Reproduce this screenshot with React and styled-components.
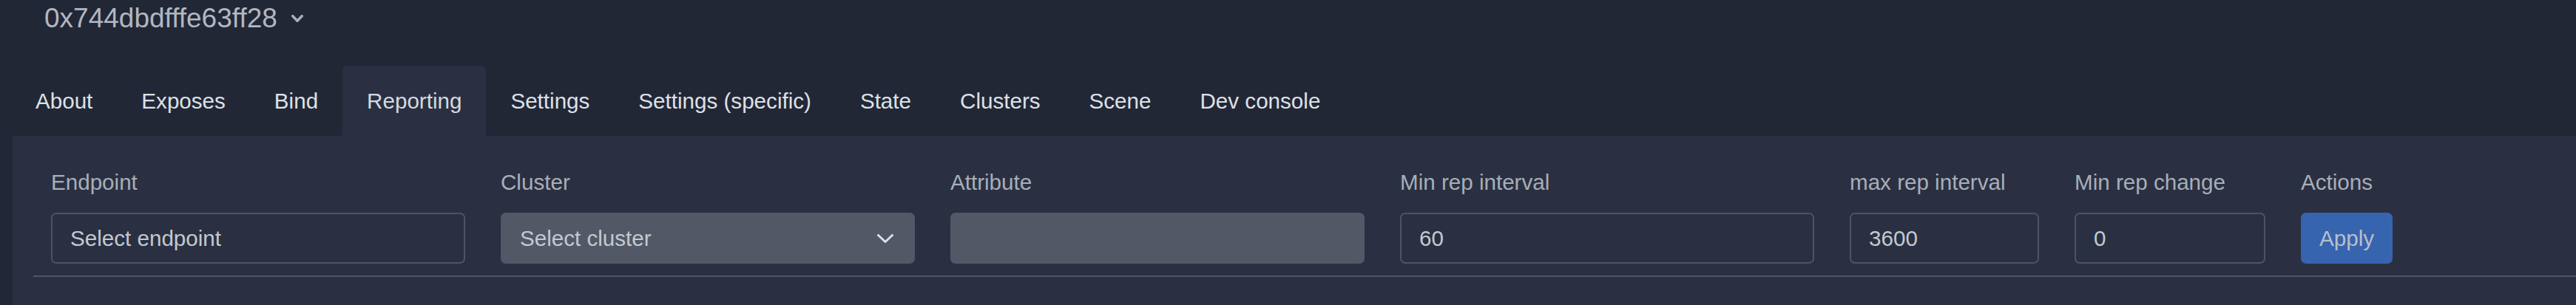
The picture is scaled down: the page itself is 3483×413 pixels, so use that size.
import React from 'react'
import styled, { createGlobalStyle } from 'styled-components'

const GlobalStyle = createGlobalStyle`
	body {
		margin: 0;
		background: #222736;
		font-family: "Liberation Sans", Arial, sans-serif;
	}
`

const Page = styled.div`
	padding-left: 15px;
	min-height: 413px;
`

const Header = styled.div`
	display: flex;
	align-items: center;
	gap: 19px;
	padding: 3px 0 0 45px;
	height: 44px;
	color: #b2b7c0;
	font-size: 37px;
	line-height: 44px;
`

const Nav = styled.div`
	display: flex;
	margin-top: 42px;
`

const Tab = styled.div`
	padding: 25px 33px;
	font-size: 29.6px;
	line-height: 45px;
	color: ${props => props.active ? '#d5d9df' : '#dde1e6'};
	background: ${props => props.active ? '#2a3042' : 'transparent'};
	border-radius: 7px 7px 0 0;
	white-space: nowrap;
`

const Panel = styled.div`
	margin-left: 2px;
	background: #2a3042;
	padding: 41px 0 40px 28px;
`

const Grid = styled.div`
	display: grid;
	grid-template-columns: 608px 608px 608px 608px 304px 306px 1fr;
	row-gap: 19px;
	padding-bottom: 16px;
	border-bottom: 2px solid #4f5563;
`

const Cell = styled.div`
	padding: 0 24px;
`

const Label = styled.div`
	font-size: 29.6px;
	line-height: 44.4px;
	color: #a8aeb8;
	white-space: nowrap;
`

const Field = styled.div`
	display: flex;
	align-items: center;
	justify-content: space-between;
	box-sizing: border-box;
	height: 69px;
	padding: 0 27px 0 24px;
	border: 2px solid ${props => props.filled ? '#525866' : '#4d5363'};
	border-radius: 7px;
	background: ${props => props.filled ? '#525866' : 'transparent'};
	color: #c4c9d0;
	font-size: 29.6px;
	line-height: 44.4px;
	white-space: nowrap;
`

const Button = styled.button`
	height: 69px;
	padding: 0 25px;
	border: none;
	border-radius: 7px;
	background: #3764ae;
	color: #b7bfcc;
	font: inherit;
	font-size: 29.6px;
	line-height: 44.4px;
`

const Caret = ({ width, height, color, stroke }) => (
	<svg width={width} height={height} viewBox={`0 0 ${width} ${height}`}>
		<polyline
			points={`${stroke / 2},${stroke / 2} ${width / 2},${height - stroke / 2} ${width - stroke / 2},${stroke / 2}`}
			fill="none"
			stroke={color}
			strokeWidth={stroke}
			strokeLinecap="round"
			strokeLinejoin="round" />
	</svg>
)

const tabs = ['About', 'Exposes', 'Bind', 'Reporting', 'Settings', 'Settings (specific)', 'State', 'Clusters', 'Scene', 'Dev console']

const labels = ['Endpoint', 'Cluster', 'Attribute', 'Min rep interval', 'max rep interval', 'Min rep change', 'Actions']

const App = () => {
	return (
		<Page>
			<GlobalStyle />
			<Header>
				<span>0x744dbdfffe63ff28</span>
				<Caret width={16} height={10} color="#a9aeb8" stroke={3.5} />
			</Header>

			<Nav>
				{tabs.map(tab => (
					<Tab key={tab} active={tab === 'Reporting'}>{tab}</Tab>
				))}
			</Nav>

			<Panel>
				<Grid>
					{labels.map(label => (
						<Cell key={label}><Label>{label}</Label></Cell>
					))}

					<Cell><Field>Select endpoint</Field></Cell>
					<Cell>
						<Field filled>
							<span>Select cluster</span>
							<Caret width={22} height={12} color="#dde0e5" stroke={3} />
						</Field>
					</Cell>
					<Cell><Field filled /></Cell>
					<Cell><Field>60</Field></Cell>
					<Cell><Field>3600</Field></Cell>
					<Cell><Field>0</Field></Cell>
					<Cell><Button>Apply</Button></Cell>
				</Grid>
			</Panel>
		</Page>
	)
}

export default App
